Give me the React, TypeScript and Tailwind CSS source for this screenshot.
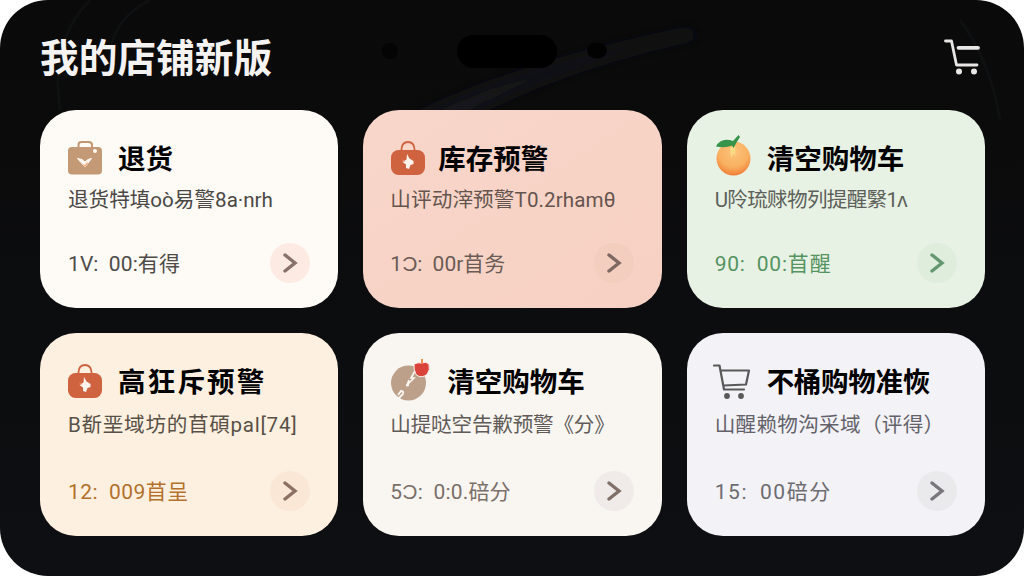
import React from "react";
import { clsx } from "clsx";

const BagIcon = () => (
  <svg width="34" height="36" viewBox="0 0 34 36" fill="none">
    <path d="M10.500 7V4Q10.500 1 13.500 1H20.500Q24 1 24 4V7" stroke="#c2966f" strokeWidth="2" />
    <rect y="6" width="34" height="27.500" rx="4" fill="#c39a75" />
    <circle cx="27" cy="10" r="2" fill="#fff8f2" />
    <path d="M9.500 17.500L14 18.500L17 21L20 18.500L23.500 17.500L17 26Z" fill="#fff8f2" stroke="#fff8f2" strokeLinejoin="round" />
    <path d="M14 22.500L17 24L19 21L20 22.500L17 26.500Z" fill="#f2b184" />
  </svg>
);

const AlertBagIcon = () => (
  <svg width="34" height="36" viewBox="0 0 34 36" fill="none">
    <path d="M10.500 10V8Q11 1 17 1Q23 1 23.500 8V10" stroke="#cf6340" strokeWidth="1.800" />
    <rect y="9" width="34" height="25" rx="7.500" fill="#cf6340" />
    <path d="M16 13L18.500 17.500L22.500 20V23L19.500 24L18 28L15 27V23.500L11.500 21L15.500 18.500Z" fill="#fff4ed" />
    <path d="M11 18.500L14.500 20L12.500 21Z" fill="#ee8d72" />
  </svg>
);

const OrangeIcon = () => (
  <svg width="36" height="42" viewBox="0 0 36 42" fill="none" overflow="visible">
    <defs>
      <radialGradient id="orange" cx="0.5" cy="0.3" r="0.75">
        <stop offset="0" stopColor="#fcc47c" />
        <stop offset="0.6" stopColor="#f9b060" />
        <stop offset="1" stopColor="#ee742f" />
      </radialGradient>
    </defs>
    <circle cx="18.500" cy="20.500" r="17" fill="url(#orange)" />
    <path d="M15 10L16 20L18.500 15L20.500 18L20 8Z" fill="#fbdc86" />
    <path d="M1 8.500Q6 -1 18 3L23.500 -3L25 -1Q21 5 18.500 10L17 7.500Q10 10.500 1 8.500Z" fill="#35934a" />
  </svg>
);

const CookieIcon = () => (
  <svg width="39" height="44" viewBox="0 0 39 44" fill="none" overflow="visible">
    <circle cx="17.500" cy="23" r="17.500" fill="#bda089" />
    <path d="M25 9L20 18L23 18L16 25L18 20" stroke="#faf6f2" strokeWidth="1.600" />
    <path d="M15 25.500L18 25" stroke="#faf6f2" strokeWidth="2" />
    <path d="M7 35L10 31Q13 31 12 34L8 38" stroke="#faf6f2" strokeWidth="1.800" />
    <path d="M23 4Q27 2 31 3Q35 1 38 4Q39.500 10 36 14.500Q30 19 25 14.500Q22.500 10 23 4Z" fill="#db443b" stroke="#faf6f2" />
    <path d="M31 3.500V-1" stroke="#ee8440" strokeWidth="1.800" />
  </svg>
);

const CartIcon = () => (
  <svg width="38" height="36" viewBox="0 0 38 36" fill="none" stroke="#5a5858" strokeWidth="2.200" strokeLinecap="round" strokeLinejoin="round">
    <path d="M1 1.500H6.500L11 25.500H31M8 6.500H36L33 20.500L10.500 21.500" />
    <circle cx="14" cy="32" r="2.900" fill="#5a5858" stroke="none" />
    <circle cx="28" cy="32" r="2.900" fill="#5a5858" stroke="none" />
  </svg>
);

const HeaderCartIcon = () => (
  <svg width="36" height="36" viewBox="0 0 36 36" fill="none" stroke="#e9e7e5" strokeWidth="2.800" strokeLinecap="round" strokeLinejoin="round">
    <path d="M1.500 2H7.500L12.500 26H33" />
    <path d="M14.500 8.800H34" strokeWidth="3.800" />
    <circle cx="15" cy="32.500" r="3" fill="#e9e7e5" stroke="none" />
    <circle cx="30" cy="32.500" r="3" fill="#e9e7e5" stroke="none" />
  </svg>
);

// faint sheen behind the cards plus the camera cutout at the top
const Backdrop = () => (
  <svg className="absolute inset-0" width="1024" height="576" viewBox="0 0 1024 576" fill="none">
    <defs>
      <filter id="soft" x="-20%" y="-50%" width="140%" height="200%">
        <feGaussianBlur stdDeviation="7" />
      </filter>
    </defs>
    <path d="M400 125Q500 70 690 30L700 36Q560 64 450 125Z" fill="#16181d" filter="url(#soft)" />
    <path d="M60 110Q50 40 90 0M110 60Q110 20 150 0M960 20Q990 60 1000 120" stroke="#0f1011" strokeWidth="3" />
    <rect x="457" y="35" width="100" height="33" rx="16.500" fill="#000" />
    <circle cx="390" cy="51" r="8" fill="#040404" />
    <ellipse cx="597" cy="50.500" rx="10" ry="8" fill="#020202" />
  </svg>
);

interface CardProps {
  icon: React.ReactNode;
  title: string;
  desc: string;
  time: string;
  bg: string;
  heading: string;
  descStyle: string;
  timeStyle: string;
  circle: string;
}

const cards: CardProps[] = [
  {
    icon: <BagIcon />,
    title: "退货",
    desc: "退货特填oò易警8a·nrh",
    time: "1V: 00:有得",
    bg: "bg-[#fefaf6]",
    heading: "gap-4",
    descStyle: "text-[#4b4745]",
    timeStyle: "text-[#4e4b49] tracking-[0.100px]",
    circle: "bg-[#fdebe3] text-[#89706a]",
  },
  {
    icon: <AlertBagIcon />,
    title: "库存预警",
    desc: "山评动滓预警T0.2rhamθ",
    time: "1Ͻ: 00r苜务",
    bg: "bg-linear-to-br from-[#f8d6ca] to-[#f6d1c3]",
    heading: "gap-[13px]",
    descStyle: "-ml-px text-[#65544e] tracking-[0.100px]",
    timeStyle: "-ml-px text-[#6b5b55]",
    circle: "bg-[#f3cdbe] text-[#7e6861]",
  },
  {
    icon: <OrangeIcon />,
    title: "清空购物车",
    desc: "U阾琉赇物列提醒繄1ʌ",
    time: "90: 00:苜醒",
    bg: "bg-[#e8f2e4]",
    heading: "gap-4",
    descStyle: "text-[#5c605a] tracking-[-0.700px]",
    timeStyle: "text-[#559361] tracking-[0.800px]",
    circle: "bg-[#dfeddd] text-[#659870]",
  },
  {
    icon: <AlertBagIcon />,
    title: "高狂斥预警",
    desc: "B斱垩域坊的苜碩pal[74]",
    time: "12: 009苜呈",
    bg: "bg-[#fdf0e0]",
    heading: "gap-4 pb-px tracking-[2.200px]",
    descStyle: "text-[#595048] pt-[2px] tracking-[0.700px]",
    timeStyle: "text-[#b3712c] tracking-[0.500px]",
    circle: "bg-[#fae7d5] text-[#8c7063]",
  },
  {
    icon: <CookieIcon />,
    title: "清空购物车",
    desc: "山提哒空告歉预警《分》",
    time: "5Ͻ: 0:0.碚分",
    bg: "bg-[#f9f5f1]",
    heading: "gap-[17px] pb-px",
    descStyle: "-ml-px text-[#605b58] pt-[2px] tracking-[-0.200px]",
    timeStyle: "-ml-px text-[#7a6f69] tracking-[0.200px]",
    circle: "bg-[#f0ebe8] text-[#817069]",
  },
  {
    icon: <CartIcon />,
    title: "不桶购物准恢",
    desc: "山醒赖物沟采域（评得）",
    time: "15: 00碚分",
    bg: "bg-[#f3f2f7]",
    heading: "-ml-0.5 gap-4 pb-px tracking-[-0.300px]",
    descStyle: "text-[#63626a] pt-[2px] tracking-[0.300px]",
    timeStyle: "text-[#6d6c70] tracking-[1.600px]",
    circle: "bg-[#eaeaed] text-[#78767a]",
  },
];

const ShopCard: React.FC<CardProps> = ({ icon, title, desc, time, bg, heading, descStyle, timeStyle, circle }) => (
  <div className={clsx("flex flex-col justify-between rounded-[36px] px-7 pt-[25px] pb-[25px]", bg)}>
    <div>
      <div className={clsx("flex h-12 items-center", heading)}>
        {icon}
        <h2 className="pt-0.5 text-[27.500px] leading-none font-bold whitespace-nowrap text-black">{title}</h2>
      </div>
      <p className={clsx("text-[20.600px] leading-[34px] whitespace-nowrap", descStyle)}>{desc}</p>
    </div>
    <div className="flex items-center justify-between">
      <span className={clsx("pt-0.5 text-[21px] leading-none [word-spacing:5px] whitespace-pre", timeStyle)}>{time}</span>
      <span className={clsx("flex size-10 items-center justify-center rounded-full", circle)}>
        <svg width="16" height="20" viewBox="0 0 16 20" fill="none" stroke="currentColor" strokeWidth="3.400" strokeLinecap="round">
          <path d="M3 2L13 10L3 18" />
        </svg>
      </span>
    </div>
  </div>
);

export default function App() {
  return (
    <div className="h-[576px] w-[1024px] overflow-hidden bg-white font-[Roboto,'Noto_Sans_CJK_SC',sans-serif]">
      <main className="relative h-full overflow-hidden rounded-[48px] bg-linear-to-b from-[#0a0a0a] to-[#0e0f12] px-10">
        <Backdrop />
        <header className="relative flex h-[110px] items-center justify-between pt-1 pr-1">
          <h1 className="pt-1 text-[38.700px] font-bold text-[#f4f3f2]">我的店铺新版</h1>
          <HeaderCartIcon />
        </header>
        <section className="relative grid w-[945px] grid-cols-3 grid-rows-[198px_203px] gap-[25px]">
          {cards.map((card, i) => (
            <ShopCard key={i} {...card} />
          ))}
        </section>
      </main>
    </div>
  );
}
